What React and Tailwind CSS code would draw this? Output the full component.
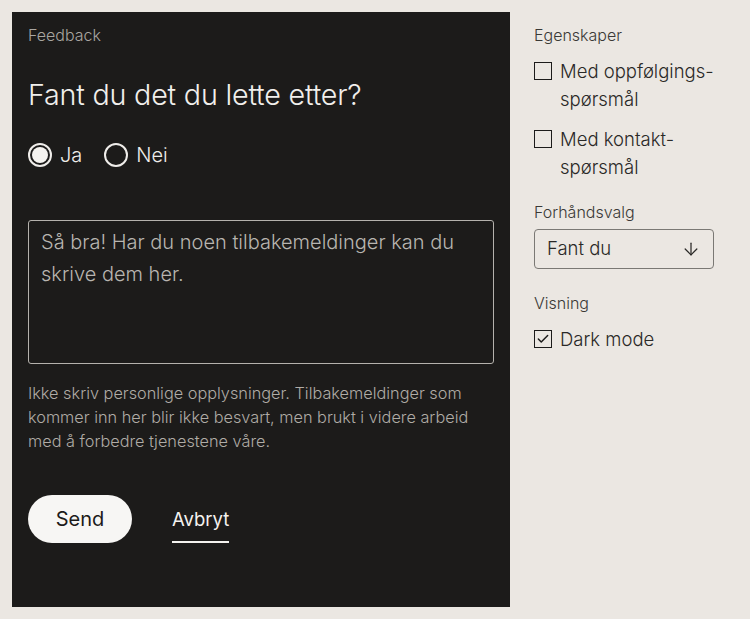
import { ArrowDown, Check } from 'lucide-react';

const font = { fontFamily: 'Inter, "Liberation Sans", sans-serif' };

function Radio({ label, checked }) {
  return (
    <label className="flex items-center gap-2">
      <span className="w-6 h-6 rounded-full border-2 border-[#efedea] flex items-center justify-center">
        {checked && <span className="w-4 h-4 rounded-full bg-[#f4f2ef]" />}
      </span>
      <span className="text-[20px] text-[#efedea] font-light">{label}</span>
    </label>
  );
}

function Checkbox({ checked, children }) {
  return (
    <div className="flex items-start gap-2">
      <span className="mt-[5px] w-[18px] h-[18px] shrink-0 border border-[#1c1b1a] flex items-center justify-center">
        {checked && <Check size={14} strokeWidth={2.5} className="text-[#1c1b1a]" />}
      </span>
      <span className="text-[18.5px] leading-[28px] text-[#2a2927] font-light">{children}</span>
    </div>
  );
}

export default function App() {
  return (
    <div className="min-h-screen bg-[#ebe7e2] flex p-3 gap-6" style={font}>
      <div className="w-[498px] h-[595px] bg-[#1c1b1a] px-4 pt-[11px] flex flex-col shrink-0">
        <p className="text-[16px] text-[#a9a6a1] font-light">Feedback</p>
        <h1 className="mt-[30px] text-[28.7px] leading-[36px] text-[#f1efec] font-light tracking-[-0.2px]">
          Fant du det du lette etter?
        </h1>
        <div className="mt-[27px] flex gap-[22px]">
          <Radio label="Ja" checked />
          <Radio label="Nei" />
        </div>
        <div className="mt-[50px] h-[144px] border border-[#b5b2ad] rounded-[3px] px-3 py-[5px] text-[20px] leading-[32px] text-[#b8b5b0] font-light">
          Så bra! Har du noen tilbakemeldinger kan du skrive dem her.
        </div>
        <p className="mt-[17px] text-[16.3px] leading-[24px] text-[#b0aca6] font-light pr-4">
          Ikke skriv personlige opplysninger. Tilbakemeldinger som kommer inn her blir ikke besvart, men brukt i videre arbeid med å forbedre tjenestene våre.
        </p>
        <div className="mt-[42px] flex items-center gap-10">
          <button className="w-[104px] h-12 rounded-full bg-[#f7f6f4] text-[#1c1b1a] text-[20px]">Send</button>
          <span className="text-[18.5px] text-[#f4f2ef] border-b-2 border-[#f4f2ef] pt-[11px] pb-[10px] leading-[24px]">Avbryt</span>
        </div>
      </div>
      <div className="pt-[11px] w-[180px] flex flex-col">
        <p className="text-[16px] text-[#3a3936] font-light">Egenskaper</p>
        <div className="mt-[10px] flex flex-col gap-3">
          <Checkbox>Med oppfølgings-spørsmål</Checkbox>
          <Checkbox>Med kontakt-spørsmål</Checkbox>
        </div>
        <p className="mt-[19px] text-[16px] text-[#3a3936] font-light">Forhåndsvalg</p>
        <div className="mt-[5px] h-10 border border-[#7a7874] rounded-[4px] flex items-center justify-between pl-3 pr-3 text-[#2a2927]">
          <span className="text-[18.5px] font-light">Fant du</span>
          <ArrowDown size={20} strokeWidth={1.5} />
        </div>
        <p className="mt-[22px] text-[16px] text-[#3a3936] font-light">Visning</p>
        <div className="mt-[10px]">
          <Checkbox checked>Dark mode</Checkbox>
        </div>
      </div>
    </div>
  );
}
